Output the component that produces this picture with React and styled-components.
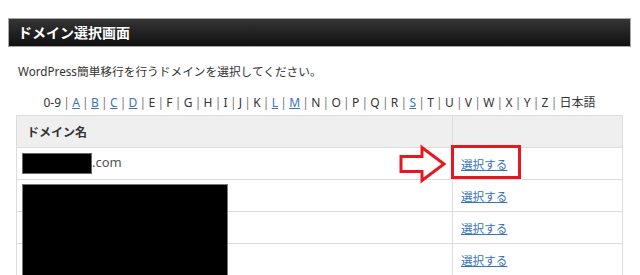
import React from "react";
import styled, { createGlobalStyle } from "styled-components";

const Global = createGlobalStyle`
  html, body { margin: 0; padding: 0; background: #fff; }
  body { font-family: "Noto Sans", "Noto Sans CJK JP", sans-serif; color: #333; }
`;

const Page = styled.div`
  padding: 18px 9px 0 8px;
  width: 640px;
  box-sizing: border-box;
`;

const TitleBar = styled.h1`
  margin: 0;
  height: 29px;
  box-sizing: border-box;
  border: 1px solid #a8a8a8;
  background: linear-gradient(#353535, #101010);
  color: #fff;
  font-size: 14px;
  font-weight: bold;
  line-height: 27px;
  padding-left: 9px;
  font-family: "Noto Sans CJK JP", sans-serif;
`;

const Content = styled.div`
  padding: 0 8px;
`;

const Lead = styled.p`
  margin: 15px 0 0 2px;
  font-size: 11.7px;
  line-height: 18px;
`;

const AlphaNav = styled.div`
  margin-top: 14px;
  text-align: center;
  font-size: 12px;
  line-height: 18px;
  color: #333;
  white-space: nowrap;
`;

const Sep = styled.span`
  color: #777;
  margin: 0 2.25px;
`;

const Letter = styled.a`
  color: ${(p) => (p.$link ? "#3a73b8" : "#333")};
  text-decoration: ${(p) => (p.$link ? "underline" : "none")};
`;

const TableWrap = styled.div`
  position: relative;
  margin-top: 3px;
`;

const Table = styled.table`
  width: 100%;
  border-collapse: collapse;
  font-size: 12px;
`;

const Th = styled.th`
  background: #efefef;
  border: 1px solid #dcdcdc;
  height: 32px;
  box-sizing: border-box;
  text-align: left;
  font-weight: bold;
  padding: 0 0 0 ${(p) => p.$pad || 10}px;
  width: ${(p) => (p.$w ? p.$w + "px" : "auto")};
  font-family: "Noto Sans CJK JP", sans-serif;
`;

const Td = styled.td`
  position: relative;
  border: 1px solid #dcdcdc;
  height: 32px;
  box-sizing: border-box;
  padding: 0 0 0 ${(p) => p.$pad || 10}px;
  font-size: 13px;
  color: #555;
`;

const Redact = styled.span`
  display: inline-block;
  width: 70px;
  height: 21px;
  background: #000;
  border: 1px solid #666;
  box-sizing: border-box;
  vertical-align: middle;
`;

const BigRedact = styled.div`
  position: absolute;
  left: 6px;
  top: 69px;
  width: 206px;
  height: 120px;
  background: #000;
  border: 1px solid #777;
  box-sizing: border-box;
`;

const Choose = styled.a`
  color: #3a73b8;
  text-decoration: underline;
  font-size: 11.6px;
  font-family: "Noto Sans CJK JP", sans-serif;
`;

const Highlight = styled.div`
  position: absolute;
  left: -2px;
  top: -3px;
  width: 70px;
  height: 34px;
  border: 3px solid #e8161e;
  box-sizing: border-box;
  pointer-events: none;
`;

const ArrowSvg = styled.svg`
  position: absolute;
  left: -57px;
  top: -3px;
  overflow: visible;
`;

const letters = [
  ["0-9", false], ["A", true], ["B", true], ["C", true], ["D", true], ["E", false],
  ["F", false], ["G", false], ["H", false], ["I", false], ["J", false], ["K", false],
  ["L", true], ["M", true], ["N", false], ["O", false], ["P", false], ["Q", false],
  ["R", false], ["S", true], ["T", false], ["U", false], ["V", false], ["W", false],
  ["X", false], ["Y", false], ["Z", false], ["日本語", false],
];

export default function App() {
  return (
    <>
      <Global />
      <Page>
        <TitleBar>ドメイン選択画面</TitleBar>
        <Content>
          <Lead>WordPress簡単移行を行うドメインを選択してください。</Lead>
          <AlphaNav>
            {letters.map(([l, link], i) => (
              <React.Fragment key={l}>
                {i > 0 && <Sep>|</Sep>}
                <Letter $link={link} href={link ? "#" : undefined}>{l}</Letter>
              </React.Fragment>
            ))}
          </AlphaNav>
          <TableWrap>
            <Table>
              <thead>
                <tr>
                  <Th $pad={10} $w={436}>ドメイン名</Th>
                  <Th></Th>
                </tr>
              </thead>
              <tbody>
                <tr>
                  <Td $pad={5}><Redact />.com</Td>
                  <Td $pad={8}>
                    <ArrowSvg width="50" height="36" viewBox="0 0 50 36">
                      <path
                        d="M5 11.5 H26 V2.5 L48 19 L26 35.5 V26.5 H5 Z"
                        fill="#fff"
                        stroke="#e8161e"
                        strokeWidth="3"
                        strokeLinejoin="miter"
                      />
                    </ArrowSvg>
                    <Highlight />
                    <Choose href="#">選択する</Choose>
                  </Td>
                </tr>
                {[0, 1, 2].map((i) => (
                  <tr key={i}>
                    <Td $pad={5}></Td>
                    <Td $pad={8}><Choose href="#">選択する</Choose></Td>
                  </tr>
                ))}
              </tbody>
            </Table>
            <BigRedact />
          </TableWrap>
        </Content>
      </Page>
    </>
  );
}
